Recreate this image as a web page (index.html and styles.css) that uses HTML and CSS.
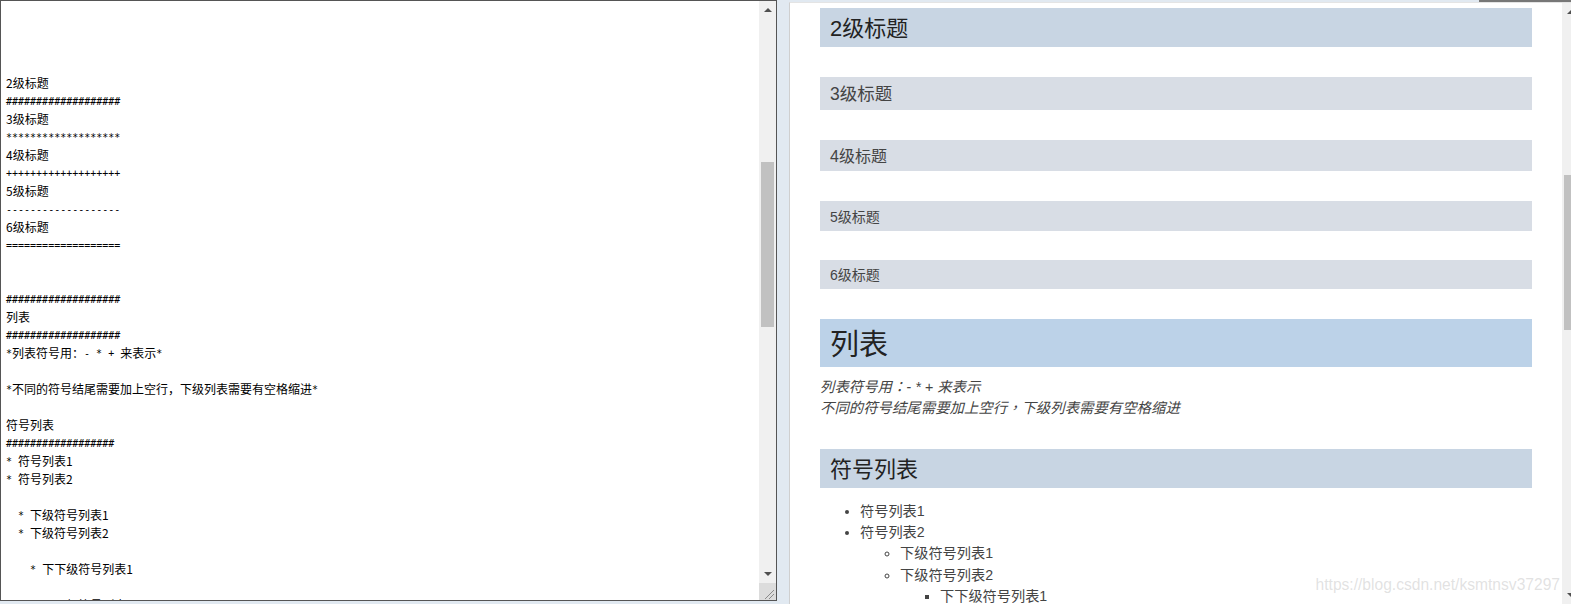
FILE: index.html
```html
<!DOCTYPE html>
<html lang="zh">
<head>
<meta charset="utf-8">
<title>Markdown</title>
<link rel="stylesheet" href="styles.css">
</head>
<body>
<main class="app">
  <section class="editor">
    <pre class="source"><span class="c">2级标题</span>
###################
<span class="c">3级标题</span>
*******************
<span class="c">4级标题</span>
+++++++++++++++++++
<span class="c">5级标题</span>
-------------------
<span class="c">6级标题</span>
===================


###################
<span class="c">列表</span>
###################
*<span class="c">列表符号用：</span>- * + <span class="c">来表示</span>*

*<span class="c">不同的符号结尾需要加上空行，下级列表需要有空格缩进</span>*

<span class="c">符号列表</span>
##################
* <span class="c">符号列表1</span>
* <span class="c">符号列表2</span>

  * <span class="c">下级符号列表1</span>
  * <span class="c">下级符号列表2</span>

    * <span class="c">下下级符号列表1</span>

        <span class="c">下级符号列表</span></pre>
    <div class="vbar">
      <span class="arrow up"></span>
      <div class="track"><div class="thumb"></div></div>
      <span class="arrow down"></span>
      <div class="grip">
        <svg width="17" height="17" viewBox="0 0 17 17"><path d="M6 16L15 7M10 16L15 11" stroke="#8a8a8a" fill="none"/></svg>
      </div>
    </div>
  </section>
  <section class="preview">
    <div class="doc">
      <h2 class="h h2">2级标题</h2>
      <h3 class="h h3">3级标题</h3>
      <h4 class="h h4">4级标题</h4>
      <h5 class="h h5">5级标题</h5>
      <h6 class="h h6">6级标题</h6>
      <h1 class="h h1">列表</h1>
      <p class="note" lang="zh-Hant"><em>列表符号用：- * + 来表示<br>不同的符号结尾需要加上空行，下级列表需要有空格缩进</em></p>
      <h2 class="h h2 second">符号列表</h2>
      <ul class="l1">
        <li>符号列表1</li>
        <li>符号列表2
          <ul class="l2">
            <li>下级符号列表1</li>
            <li>下级符号列表2
              <ul class="l3"><li>下下级符号列表1</li></ul>
            </li>
          </ul>
        </li>
      </ul>
    </div>
    <div class="pbar">
      <span class="arrow up cut"></span>
      <div class="ptrack"><div class="pthumb"></div></div>
      <span class="arrow down cut"></span>
    </div>
    <div class="watermark">https://blog.csdn.net/ksmtnsv37297</div>
  </section>
</main>
<div class="topline"></div>
</body>
</html>
```
FILE: styles.css
```css
html, body {
  margin: 0;
  padding: 0;
  height: 604px;
  overflow: hidden;
  background: #e1e9f1;
}
.app {
  display: flex;
  height: 604px;
  align-items: flex-start;
}
.editor {
  width: 775px;
  height: 599px;
  border: 1px solid #555;
  background: #fff;
  display: flex;
  flex: none;
}
.source {
  flex: 1;
  margin: 0;
  padding: 74px 0 0 5px;
  height: 525px;
  overflow: hidden;
  font: 10px/18px "DejaVu Sans Mono", monospace;
  color: #000;
}
.c {
  font: 400 12px/0 "Noto Sans CJK SC", sans-serif;
  vertical-align: -1px;
}
.vbar {
  width: 17px;
  background: #f0f0f0;
  display: flex;
  flex-direction: column;
  align-items: center;
  flex: none;
}
.arrow {
  display: block;
  width: 0;
  height: 0;
  border-left: 4px solid transparent;
  border-right: 4px solid transparent;
  flex: none;
}
.arrow.up {
  border-bottom: 4px solid #505050;
  margin: 7px 0 6px;
}
.arrow.down {
  border-top: 4px solid #505050;
  margin: 6px 0 7px;
}
.track {
  flex: 1;
  width: 100%;
  padding: 144px 2px 0;
  box-sizing: border-box;
}
.thumb {
  height: 165px;
  background: #c1c1c1;
}
.grip {
  width: 100%;
  height: 17px;
  background: #dcdcdc;
  flex: none;
}
.grip svg {
  display: block;
}
.preview {
  position: relative;
  flex: 1;
  height: 601px;
  margin: 2px 0 0 12px;
  background: #fff;
  border-left: 1px solid #cfcfcf;
  border-top: 1px solid #e4e4e4;
  display: flex;
  min-width: 0;
}
.doc {
  flex: 1;
  padding: 5px 30px 0 30px;
  min-width: 0;
  overflow: hidden;
  font: 14.2px/21.2px "Liberation Sans", "Noto Sans CJK SC", sans-serif;
  color: #444;
}
.h {
  margin: 0;
  padding: 1px 10px 0;
  box-sizing: border-box;
  font-weight: 400;
}
.h1 {
  margin-top: 30px;
  height: 48px;
  background: #bcd2e8;
  font-size: 29px;
  line-height: 50px;
  color: #222;
}
.h2 {
  height: 39px;
  background: #c8d5e3;
  font-size: 22px;
  line-height: 39px;
  color: #222;
}
.second {
  margin-top: 30px;
}
.h3 {
  margin-top: 30px;
  height: 33px;
  background: #d8dde5;
  font-size: 17.5px;
  line-height: 33px;
}
.h4 {
  margin-top: 30px;
  height: 31px;
  background: #d8dde5;
  font-size: 16px;
  line-height: 31px;
}
.h5 {
  margin-top: 30px;
  height: 30px;
  background: #d8dde5;
  font-size: 14px;
  line-height: 30px;
}
.h6 {
  margin-top: 29px;
  height: 29px;
  background: #d8dde5;
  font-size: 14px;
  line-height: 29px;
}
.note {
  margin: 10px 0 0;
  font: 14.4px/21px "Liberation Sans", "Noto Sans CJK TC", sans-serif;
}
ul {
  margin: 0;
  padding-left: 40px;
}
.l1 {
  margin-top: 13px;
  list-style: disc;
}
.l2 {
  list-style: circle;
}
.l3 {
  list-style: square;
}
.pbar {
  width: 9px;
  flex: none;
  background: #f0f0f0;
  display: flex;
  flex-direction: column;
  overflow: hidden;
}
.arrow.cut {
  margin-left: 5px;
}
.ptrack {
  flex: 1;
  padding: 155px 0 0 2px;
}
.pthumb {
  height: 155px;
  background: #c1c1c1;
}
.watermark {
  position: absolute;
  right: 11px;
  bottom: 9px;
  font: 15.6px/20px "Liberation Sans", sans-serif;
  color: rgba(190, 190, 190, 0.45);
}
.topline {
  position: absolute;
  top: 0;
  left: 1479px;
  width: 92px;
  height: 2px;
  background: #777;
}
```
